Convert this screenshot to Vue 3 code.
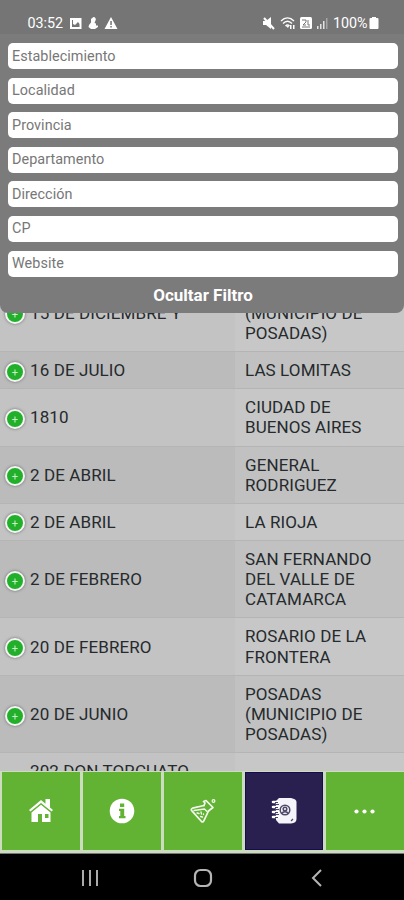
<template>
  <div class="screen">
    <main class="list">
      <div v-for="(row, i) in rows" :key="i" class="row" :class="{ even: i % 2 }">
        <div class="cell name">
          <span v-if="!row.last" class="plus">+</span>
          <span class="label">{{ row.name }}</span>
        </div>
        <div class="cell city">
          <div v-for="line in row.city" :key="line">{{ line }}</div>
        </div>
      </div>
    </main>

    <nav class="tabs">
      <button class="tab">
        <svg width="26" height="26" viewBox="0 0 26 26" fill="#fff">
          <path d="M13 2 1 12l1.400 1.600L13 5l10.600 8.600L25 12l-3-2.500V1h-4.500v4.800z" />
          <path d="M13 6.800 3.500 14.500V24h6.500v-8h4v8h8.500V14.500zM17 16h3.500v4H17z" fill-rule="evenodd" />
        </svg>
      </button>
      <button class="tab">
        <svg width="26" height="26" viewBox="0 0 26 26">
          <circle cx="13" cy="13" r="12.300" fill="#fff" />
          <path d="M11 5.500h4.200v3.500H11zM10 10.800h5.200v7.200h1.300v2.200H10V18h1.300v-5H10z" fill="#62b234" />
        </svg>
      </button>
      <button class="tab">
        <svg width="28" height="28" viewBox="0 0 28 28" fill="none" stroke="#f3f9ee" stroke-width="1.700" stroke-linejoin="round" stroke-linecap="round">
          <path d="M15 8.500 3.500 11.200q-2 .8-.8 2.400L12.500 24.500q1.500 1.200 2.300-.6L19.500 14" />
          <path d="M15 8.500 16 6l-1.500-1.500L17 3.500l7 7-2 1.500-2.500 2" />
          <path d="M5 13.500l10.500-1.500 2.500 2.500M8 16l2 .5M12 15l.5 2M11.500 19.500l2 .5M14.500 17v.5" stroke-width="1.300" />
          <circle cx="24.500" cy="4" r="1.400" stroke-width="1.200" />
        </svg>
      </button>
      <button class="tab active">
        <svg width="28" height="28" viewBox="0 0 28 28">
          <path d="M9 1h12q5.500 1 5.500 4v17q0 4-5.500 4.500H9L6 23V4z" fill="#f4f4fa" />
          <path d="M3 5h6M3 10h6M3 15h6M3 20h6" stroke="#fff" stroke-width="2.600" stroke-linecap="round" />
          <path d="M5 7.500h4M5 12.500h4M5 17.500h4M5 5.500h3M5 10.500h3M5 15.500h3M5 20.500h3" stroke="#4a4270" stroke-width="1" />
          <g fill="none" stroke="#4f4a68" stroke-width="1.500">
            <circle cx="15" cy="13" r="4.800" />
            <circle cx="15" cy="12" r="1.800" />
            <path d="M11.500 17c1-3 6-3 7 0" />
            <path d="M21 24l2-2" stroke-width="1.200" />
          </g>
        </svg>
      </button>
      <button class="tab">
        <svg width="26" height="26" viewBox="0 0 26 26" fill="#fff">
          <circle cx="4.500" cy="13.500" r="2.100" /><circle cx="12.500" cy="13.500" r="2.100" /><circle cx="20.500" cy="13.500" r="2.100" />
        </svg>
      </button>
    </nav>

    <footer class="system">
      <svg width="18" height="18" viewBox="0 0 18 18" stroke="#aaa" stroke-width="2"><path d="M2 1v16M9 1v16M16 1v16" /></svg>
      <svg width="20" height="20" viewBox="0 0 20 20" fill="none" stroke="#b5b5b5" stroke-width="2.200"><rect x="2" y="2" width="16" height="16" rx="5.500" /></svg>
      <svg width="18" height="18" viewBox="0 0 18 18" fill="none" stroke="#b5b5b5" stroke-width="2"><path d="M14 1 6 9l8 8" /></svg>
    </footer>

    <header class="panel">
      <div class="status">
        <span class="time">03:52</span>
        <svg width="49" height="14" viewBox="0 0 49 14" fill="#fff">
          <path fill-rule="evenodd" d="M1 2h11.500v11H1zM3 4v7h7.500V8L9 6 6 9 4 8V4z" />
          <path d="M24.500 1a2.300 2.300 0 0 1 2 3.500L25.500 7l1.500.5v2h2v1.500l-3 2h-4l-2.500-2 .5-2 2-2.500V3z" />
          <path fill-rule="evenodd" d="M42 1 48.500 13H35.500zM41.300 5v4h1.500V5zM41.300 10v1.500h1.500V10z" />
        </svg>
        <span class="space"></span>
        <svg class="signals" width="68" height="14" viewBox="0 0 68 14" fill="#fff">
          <path d="M1 5h3l5-4v12L4 9H1z" /><path d="M2 2l10 11" stroke="#fff" stroke-width="2" />
          <g fill="none" stroke="#fff" stroke-width="1.400">
            <path d="M19 5c4-4 9-4 13 0M21 7.500c3-3 6-3 9 0M23.500 10c1.500-1.500 2.500-1.500 4 0" />
          </g>
          <path d="M24 10l2 2 1-2zM28 9h1.500v4H28zM31 9h1.500v4H31z" />
          <rect x="38" y="1" width="12" height="12" rx="1.500" />
          <path d="M40 4h4v2l-3 3h3M46 4v5h2M40 11h8" fill="none" stroke="#777" />
          <path d="M55 10h1.500v3H55zM58 8h1.500v5H58zM61 5h1.500v8H61z" opacity=".8" /><path d="M64 2h1.500v11H64z" opacity=".35" />
        </svg>
        <span class="battery-text">100%</span>
        <svg width="10" height="14" viewBox="0 0 10 14" fill="#fff"><path d="M3 1h4v1h1.500q1 0 1 1v9q0 1-1 1h-7q-1 0-1-1V3q0-1 1-1H3z" /></svg>
      </div>
      <form class="filters">
        <input v-for="field in fields" :key="field" type="text" :placeholder="field" />
        <button type="button" class="toggle">Ocultar Filtro</button>
      </form>
    </header>
  </div>
</template>

<script setup>
const fields = ['Establecimiento', 'Localidad', 'Provincia', 'Departamento', 'Dirección', 'CP', 'Website']

const rows = [
  { name: '15 DE DICIEMBRE Y', city: ['POSADAS', '(MUNICIPIO DE', 'POSADAS)'] },
  { name: '16 DE JULIO', city: ['LAS LOMITAS'] },
  { name: '1810', city: ['CIUDAD DE', 'BUENOS AIRES'] },
  { name: '2 DE ABRIL', city: ['GENERAL', 'RODRIGUEZ'] },
  { name: '2 DE ABRIL', city: ['LA RIOJA'] },
  { name: '2 DE FEBRERO', city: ['SAN FERNANDO', 'DEL VALLE DE', 'CATAMARCA'] },
  { name: '20 DE FEBRERO', city: ['ROSARIO DE LA', 'FRONTERA'] },
  { name: '20 DE JUNIO', city: ['POSADAS', '(MUNICIPIO DE', 'POSADAS)'] },
  { name: '202 DON TORCUATO', city: [], last: true }
]
</script>

<style>
body {
  background: #c5c5c5;
}
</style>

<style scoped>
.screen {
  position: relative;
  display: flex;
  flex-direction: column;
  height: 900px;
  overflow: hidden;
  font-family: Roboto, sans-serif;
}
.list {
  flex: 1;
  min-height: 0;
  overflow: hidden;
  padding-top: 274.6px;
  box-sizing: border-box;
  color: #252a2d;
  font-size: 17px;
  line-height: 20.15px;
}
.row {
  display: grid;
  grid-template-columns: 235px 1fr;
  border-bottom: 1px solid #b5b5b5;
  background: #c7c7c7;
}
.cell {
  padding: 8px 10px;
}
.name {
  display: flex;
  align-items: center;
  padding-left: 30px;
  background: #c3c3c3;
  letter-spacing: 0.1px;
}
.even {
  background: #c1c1c1;
}
.even .name {
  background: #bbb;
}
.plus {
  flex: none;
  width: 16px;
  height: 16px;
  margin: -1px 5px -4px -25px;
  border: 2px solid #f4f4f4;
  border-radius: 50%;
  background: #22b02b;
  box-shadow: 0 0 3px #666;
  color: #c5efc5;
  font-size: 11px;
  line-height: 17px;
  text-align: center;
}
.label {
  white-space: nowrap;
}
.city {
  letter-spacing: 0.1px;
}
.tabs {
  display: grid;
  grid-template-columns: repeat(5, 78px);
  gap: 3px;
  height: 83px;
  padding: 1px 0 3px 2px;
  box-sizing: border-box;
  background: #cbdcbf;
  border-bottom: 1px solid #777;
}
.tab {
  display: flex;
  align-items: center;
  justify-content: center;
  padding: 0;
  border: 0;
  background: #62b234;
}
.active {
  background: #2a204f;
  box-shadow: inset 0 0 0 1px #160b50;
}
.system {
  display: flex;
  justify-content: space-between;
  align-items: center;
  height: 46px;
  padding: 1px 79px 0 81px;
  box-sizing: border-box;
  background: #000;
}
.panel {
  position: absolute;
  top: 0;
  left: 0;
  right: 0;
  height: 313px;
  border-radius: 0 0 8px 8px;
  background: #7b7b7b;
}
.status {
  display: flex;
  align-items: center;
  height: 34px;
  padding: 12px 25px 0 27.5px;
  box-sizing: border-box;
  background: #757575;
  color: #fff;
  font-size: 14.3px;
}
.time {
  width: 41px;
}
.space {
  flex: 1;
}
.signals {
  margin-right: 3px;
}
.battery-text {
  width: 36px;
}
.filters {
  display: flex;
  flex-direction: column;
  gap: 8.6px;
  padding: 9px 6px 0 8px;
}
input {
  height: 26px;
  padding: 0 4px;
  box-sizing: border-box;
  border: 0;
  border-radius: 5px;
  background: #fff;
  font: 14.4px Roboto, sans-serif;
  letter-spacing: 0.05px;
}
input::placeholder {
  color: #777;
}
.toggle {
  padding: 0;
  border: 0;
  background: none;
  color: #fff;
  font: bold 17px/20px Roboto, sans-serif;
}
</style>
